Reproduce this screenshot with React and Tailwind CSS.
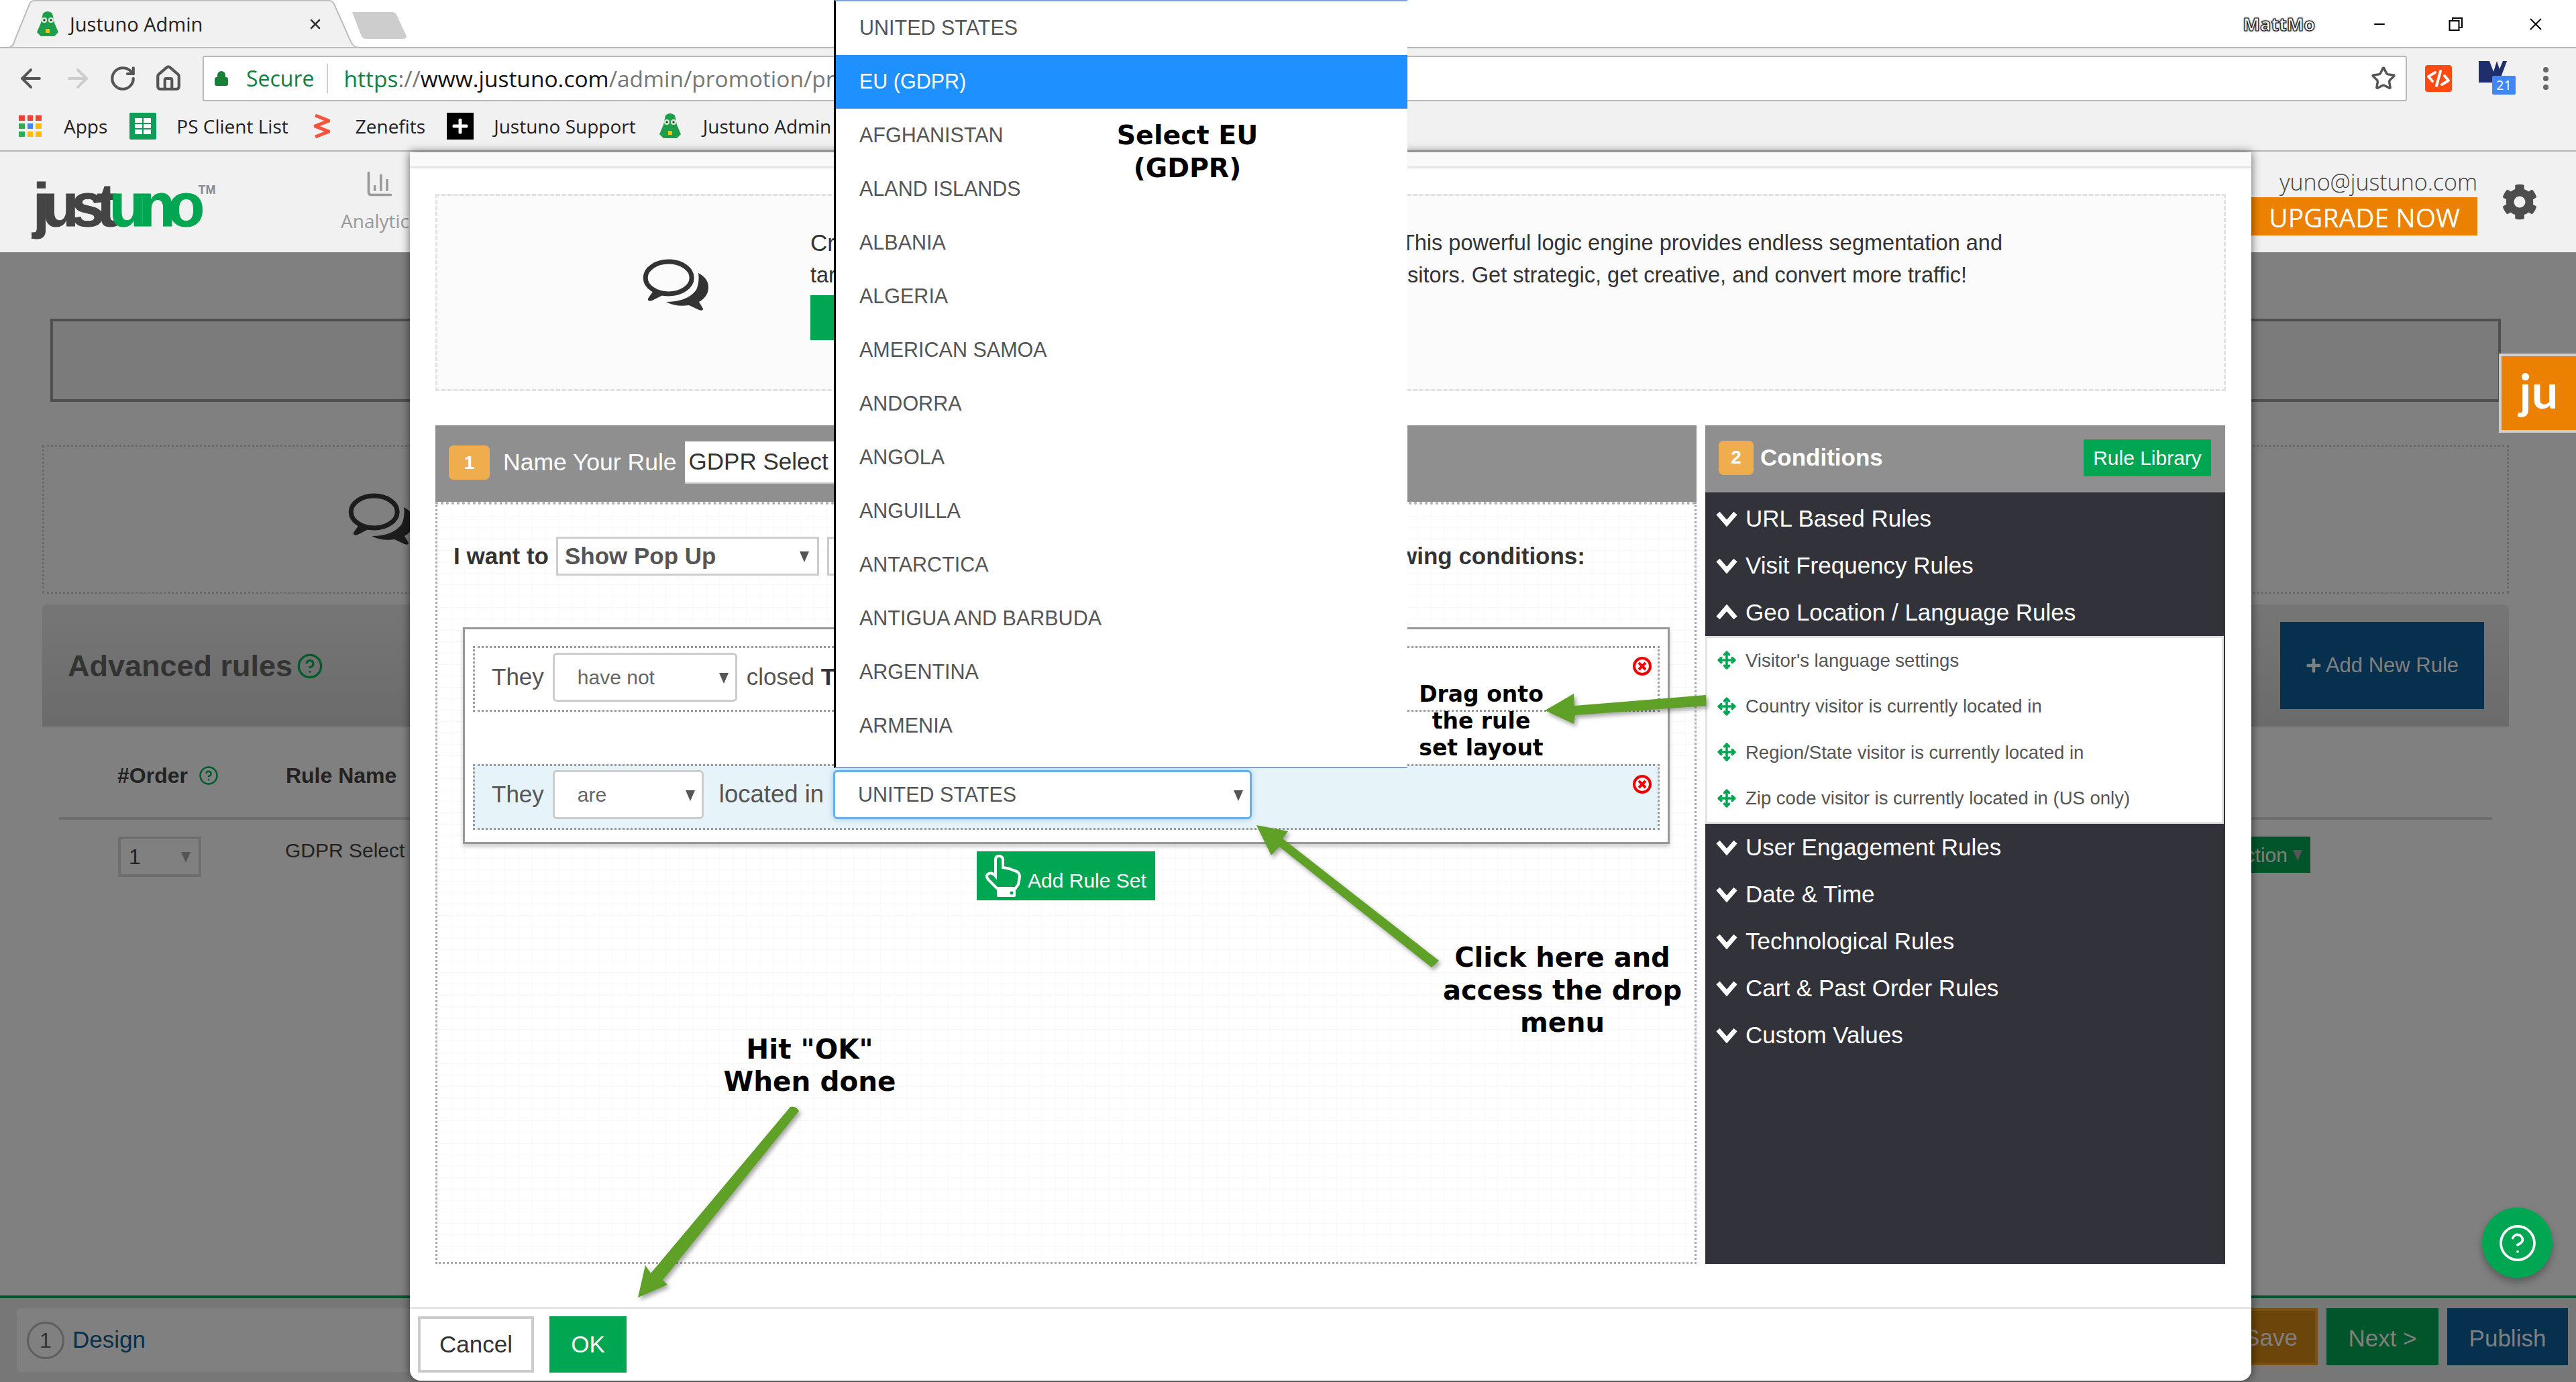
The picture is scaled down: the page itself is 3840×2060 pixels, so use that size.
import React from 'react';
import { ArrowLeft, ArrowRight, RotateCw, Home, Lock, Star, Move, X, Minus, HelpCircle, ChartColumn } from 'lucide-react';
import { FaCog, FaPlus } from 'react-icons/fa';

const COUNTRIES = ['UNITED STATES', 'EU (GDPR)', 'AFGHANISTAN', 'ALAND ISLANDS', 'ALBANIA', 'ALGERIA', 'AMERICAN SAMOA', 'ANDORRA', 'ANGOLA', 'ANGUILLA', 'ANTARCTICA', 'ANTIGUA AND BARBUDA', 'ARGENTINA', 'ARMENIA'];
const GEO_ITEMS = ["Visitor's language settings", 'Country visitor is currently located in', 'Region/State visitor is currently located in', 'Zip code visitor is currently located in (US only)'];
const RULES_BEFORE = ['URL Based Rules', 'Visit Frequency Rules'];
const RULES_AFTER = ['User Engagement Rules', 'Date & Time', 'Technological Rules', 'Cart & Past Order Rules', 'Custom Values'];

const Caret = ({ className = '' }) => (
  <svg width="14" height="20" viewBox="0 0 14 20" className={className}>
    <polygon points="0,3 14,3 7,19" fill="#555" />
  </svg>
);

const Chevron = ({ up }) => (
  <svg width="32" height="24" viewBox="0 0 32 24" className="shrink-0">
    <path d={up ? 'M3 20 L16 5 L29 20' : 'M3 4 L16 19 L29 4'} fill="none" stroke="#fff" strokeWidth="7" />
  </svg>
);

const Robot = ({ className = '' }) => (
  <svg width="38" height="40" viewBox="0 0 38 40" className={className}>
    <path d="M12 4 Q19 -2 26 4 L29 18 L35 32 L29 38 L9 38 L3 32 L9 18 Z" fill="#1e9e4a" />
    <circle cx="14" cy="14" r="4" fill="#d6efd9" />
    <circle cx="24" cy="14" r="4" fill="#d6efd9" />
    <circle cx="14" cy="14" r="1.6" fill="#222" />
    <circle cx="24" cy="14" r="1.6" fill="#222" />
    <rect x="16" y="27" width="6" height="6" fill="#f4c20d" />
  </svg>
);

const ChatIcon = ({ className = '', color = '#333' }) => (
  <svg width="150" height="110" viewBox="0 0 150 110" className={className}>
    <ellipse cx="66.7" cy="44" rx="34.5" ry="24" fill="none" stroke={color} strokeWidth="7" />
    <path d="M45 62 L36 75 Q35 80 42 78 L60 69 Z" fill={color} />
    <path d="M111 37 Q126 45 126 58 Q126 72 112 80 L118 90 Q118 94 112 92 L97 85 Q78 88 63 80 Q95 80 108 62 Q113 50 111 37 Z" fill={color} />
  </svg>
);

const HandIcon = () => (
  <svg width="54" height="64" viewBox="0 0 54 64" className="shrink-0">
    <path d="M16 32 V8 Q16 2 21 2 Q27 2 27 8 V19 L37 21 L45 24 Q52 26 52 33 L50 44 L46 50 H18 L6 38 Q0 31 6 28 Q11 26 16 32 Z" fill="none" stroke="#fff" strokeWidth="4" />
    <rect x="18" y="50" width="28" height="13" rx="2" fill="#fff" />
    <circle cx="40" cy="57" r="2.5" fill="#00a651" />
  </svg>
);

const AppsGrid = () => (
  <div className="grid grid-cols-3 gap-[4px] w-[34px]">
    {['bg-[#ea4335]', 'bg-[#ea4335]', 'bg-[#ea4335]', 'bg-[#34a853]', 'bg-[#4285f4]', 'bg-[#fbbc05]', 'bg-[#34a853]', 'bg-[#fbbc05]', 'bg-[#fbbc05]'].map((c, i) => (
      <div key={i} className={`h-[8px] ${c}`}></div>
    ))}
  </div>
);

const Browser = () => (
  <div className="font-['Open_Sans',sans-serif]">
    <div className="relative h-[72px] bg-white border-b-2 border-[#b5b5b5]">
      <svg width="620" height="72" viewBox="0 0 620 72" className="absolute left-0 top-0">
        <path d="M12 71 Q20 70 22 60 L44 6 Q46 1 52 1 L490 1 Q496 1 498 6 L522 60 Q526 70 534 71 Z" fill="#f1f1f1" stroke="#bdbdbd" strokeWidth="2" />
        <path d="M525 18 L585 18 Q590 18 592 24 L606 54 Q606 58 600 58 L546 58 Q540 58 538 52 Z" fill="#cdcdcd" />
      </svg>
      <div className="relative flex items-center h-[72px] pl-[52px]">
        <Robot />
        <span className="ml-[14px] text-[29px] text-[#222]">Justuno Admin</span>
        <X className="ml-[156px] w-[24px] h-[24px] text-[#333]" strokeWidth={2.5} />
        <div className="ml-auto flex items-center pr-[45px]">
          <span className="text-[27px] text-white font-bold [-webkit-text-stroke:1.2px_#222] [text-shadow:0_0_3px_#000]">MattMo</span>
          <Minus className="ml-[84px] w-[24px] h-[24px] text-black" strokeWidth={2} />
          <svg width="24" height="24" viewBox="0 0 24 24" className="ml-[90px]">
            <rect x="2.5" y="7" width="14" height="14" fill="none" stroke="#000" strokeWidth="2" />
            <path d="M7 7 V3 H21 V17 H17" fill="none" stroke="#000" strokeWidth="2" />
          </svg>
          <X className="ml-[92px] w-[30px] h-[30px] text-black" strokeWidth={1.5} />
        </div>
      </div>
    </div>

    <div className="flex items-center h-[78px] bg-[#f1f1f1] pl-[24px] pr-[41px] pt-[12px]">
      <ArrowLeft className="w-[44px] h-[44px] text-[#555] shrink-0" strokeWidth={2.2} />
      <ArrowRight className="ml-[26px] w-[44px] h-[44px] text-[#ccc] shrink-0" strokeWidth={2.2} />
      <RotateCw className="ml-[24px] w-[42px] h-[42px] text-[#555] shrink-0" strokeWidth={2.4} />
      <Home className="ml-[26px] w-[42px] h-[42px] text-[#555] shrink-0" strokeWidth={2.4} />
      <div className="ml-[30px] flex-1 flex items-center h-[68px] bg-white border-2 border-[#b8b8b8] rounded-[3px] pl-[14px]">
        <Lock className="w-[24px] h-[32px] text-[#188038] fill-[#188038]" strokeWidth={2} />
        <span className="ml-[25px] text-[32px] text-[#0b8043]">Secure</span>
        <div className="ml-[18px] w-[2px] h-[44px] bg-[#ccc]"></div>
        <span className="ml-[24px] text-[33.5px] whitespace-nowrap text-[#777]">
          <span className="text-[#0b8043]">https</span>://<span className="text-[#111]">www.justuno.com</span>/admin/promotion/pr
        </span>
        <Star className="ml-auto mr-[14px] w-[38px] h-[38px] text-[#555]" strokeWidth={2.2} />
      </div>
      <svg width="40" height="40" viewBox="0 0 40 40" className="ml-[27px] shrink-0">
        <rect width="40" height="40" rx="4" fill="#ff4a12" />
        <path d="M15 11 L5 17 L11 24 M25 29 L35 23 L29 16 M23 9 L17 31" fill="none" stroke="#fff" strokeWidth="4" strokeLinecap="round" strokeLinejoin="round" />
      </svg>
      <div className="relative ml-[40px] w-[55px] h-[52px] shrink-0">
        <svg width="42" height="32" viewBox="0 0 42 32">
          <path d="M0 0 H42 L30 32 H0 Z" fill="#1f2f6e" />
          <path d="M16 0 L22 16 L27 0 Z M27 0 L31 12 L36 0 Z" fill="#f1f1f1" />
        </svg>
        <div className="absolute left-[20px] top-[22px] w-[35px] h-[28px] rounded-[2px] bg-[#4285f4] text-white text-[20px] leading-[28px] text-center">21</div>
      </div>
      <div className="ml-[41px] flex flex-col gap-[5px] shrink-0">
        <div className="w-[8px] h-[8px] rounded-full bg-[#666]"></div>
        <div className="w-[8px] h-[8px] rounded-full bg-[#666]"></div>
        <div className="w-[8px] h-[8px] rounded-full bg-[#666]"></div>
      </div>
    </div>

    <div className="flex items-center h-[76px] bg-[#f1f1f1] border-b-2 border-[#b5b5b5] pl-[28px] pt-[2px] text-[28px] text-[#222] whitespace-nowrap">
      <AppsGrid />
      <span className="ml-[33px]">Apps</span>
      <div className="ml-[33px] w-[40px] h-[40px] bg-[#0f9d58] rounded-[2px] p-[8px] grid grid-cols-2 gap-[2px]">
        <div className="bg-white"></div><div className="bg-white"></div>
        <div className="bg-white"></div><div className="bg-white"></div>
        <div className="bg-white"></div><div className="bg-white"></div>
      </div>
      <span className="ml-[30px]">PS Client List</span>
      <svg width="24" height="40" viewBox="0 0 24 40" className="ml-[38px]">
        <path d="M2 4 L22 12 L2 20 L22 28 L2 36" fill="none" stroke="#f4533c" strokeWidth="5" />
      </svg>
      <span className="ml-[38px]">Zenefits</span>
      <div className="ml-[32px] w-[40px] h-[40px] bg-black flex items-center justify-center"><FaPlus className="w-[26px] h-[26px] text-white" /></div>
      <span className="ml-[30px]">Justuno Support</span>
      <Robot className="ml-[32px]" />
      <span className="ml-[30px]">Justuno Admin</span>
    </div>
  </div>
);

const AppHeader = () => (
  <div className="flex items-center justify-between h-[150px] bg-[#f1f1f1] pl-[49px] pr-[57px]">
    <div className="flex items-center">
      <div className="flex items-start w-[293px] h-[110px] pt-[10px] font-bold text-[90px] leading-[100px] tracking-[-11.5px] [-webkit-text-stroke:1px_currentColor]">
        <span className="text-[#444]">just</span>
        <span className="text-[#00a651]">uno</span>
        <span className="ml-[2px] mt-[12px] text-[18px] leading-[30px] tracking-normal text-[#888] [-webkit-text-stroke:0]">TM</span>
      </div>
      <div className="ml-[166px] flex flex-col items-center text-[#999]">
        <ChartColumn className="w-[44px] h-[44px]" strokeWidth={2} />
        <span className="mt-[12px] text-[28px] font-['Open_Sans',sans-serif]">Analytics</span>
      </div>
    </div>
    <div className="flex items-center">
      <div className="flex flex-col items-end font-['Open_Sans',sans-serif]">
        <span className="text-[34px] font-light text-[#444] leading-[40px]">yuno@justuno.com</span>
        <div className="mt-[3px] flex items-center h-[57px] bg-[#ec8000] px-[26px] pt-[2px] text-[39px] text-white leading-none">UPGRADE NOW</div>
      </div>
      <FaCog className="ml-[36px] w-[54px] h-[54px] text-[#4d4d4d]" />
    </div>
  </div>
);

const Backdrop = () => (
  <div className="flex-1 flex flex-col bg-[#808080] text-[#222] overflow-hidden">
    <div className="flex-1 pl-[63px] pr-[100px] pt-[99px]">
      <div className="mx-[12px] h-[124px] border-[4px] border-[#4f4f4f] bg-[#7b7b7b]"></div>
      <div className="mt-[64px] h-[222px] border-[3px] border-dotted border-[#6a6a6a] flex items-center pl-[425px]">
        <ChatIcon color="#1c1c1c" />
      </div>
      <div className="mt-[16px] h-[182px] rounded-t-[8px] bg-gradient-to-b from-[#767676] to-[#6b6b6b] flex items-center justify-between pl-[38px] pr-[37px]">
        <div className="flex items-center pt-[2px] text-[45px] font-bold text-[#333]">
          Advanced rules
          <HelpCircle className="ml-[6px] w-[40px] h-[40px] text-[#005c2c]" strokeWidth={2} />
        </div>
        <div className="flex items-center justify-center w-[304px] h-[130px] bg-[#06304d] text-[#808080] text-[31px]">
          <FaPlus className="mr-[6px] w-[24px] h-[24px]" />Add New Rule
        </div>
      </div>
      <div className="mx-[25px] h-[139px] border-b-[4px] border-[#6e6e6e] flex items-center text-[32px] font-bold pl-[87px] pt-[10px]">
        <span>#Order</span>
        <HelpCircle className="ml-[16px] w-[30px] h-[30px] text-[#005c2c]" strokeWidth={2} />
        <span className="ml-[100px]">Rule Name</span>
      </div>
      <div className="mx-[25px] flex items-start pt-[25px] pl-[88px] pr-[271px]">
        <div className="flex items-center justify-between w-[124px] h-[60px] border-[4px] border-[#6e6e6e] px-[12px] text-[32px]">1<Caret /></div>
        <span className="ml-[125px] mt-[-2px] text-[30px]">GDPR Select</span>
        <div className="ml-auto flex items-center h-[54px] px-[12px] bg-[#02542a] text-[#808080] text-[30px]">Action <Caret className="ml-[8px]" /></div>
      </div>
    </div>
    <div className="flex items-start justify-between h-[129px] bg-[#777] border-t-[4px] border-[#02542a] pl-[25px] pr-[12px] pt-[15px]">
      <div className="flex items-center w-[600px] h-[95px] bg-[#808080] rounded-[6px] pl-[15px]">
        <div className="flex items-center justify-center w-[56px] h-[56px] rounded-full border-[3px] border-[#5e5e5e] text-[32px] text-[#333]">1</div>
        <span className="ml-[12px] text-[35px] text-[#06304d]">Design</span>
      </div>
      <div className="flex gap-[13px] text-[35px] text-[#808080]">
        <div className="flex items-center justify-center w-[140px] h-[85px] pt-[4px] bg-[#6b4509] border-[4px] border-[#7b5017]">Save</div>
        <div className="flex items-center justify-center w-[167px] h-[85px] pt-[6px] bg-[#02542a]">Next &gt;</div>
        <div className="flex items-center justify-center w-[180px] h-[85px] pt-[6px] bg-[#06304d]">Publish</div>
      </div>
    </div>
  </div>
);

const SelectBox = ({ children, className = '' }) => (
  <div className={`flex items-center justify-between h-[73px] bg-white border-[3px] border-[#ccc] rounded-[6px] pl-[34px] pr-[10px] text-[#666] ${className}`}>
    {children}
    <Caret />
  </div>
);

const RemoveIcon = () => (
  <svg width="30" height="30" viewBox="0 0 30 30" className="self-start mt-[12px]">
    <circle cx="15" cy="15" r="12" fill="#fff" stroke="#f00000" strokeWidth="4" />
    <path d="M10 10 L20 20 M20 10 L10 20" stroke="#f00000" strokeWidth="4" />
  </svg>
);

const RulePanel = () => (
  <div className="w-[1880px] flex flex-col">
    <div className="flex items-center h-[114px] bg-[#8f8f8f] pl-[20px] pb-[3px] text-[35px] text-white">
      <div className="flex items-center justify-center w-[61px] h-[51px] rounded-[7px] bg-[#f0ad4e] text-[28px] font-bold">1</div>
      <span className="ml-[20px] text-[35.5px]">Name Your Rule</span>
      <div className="ml-[12px] flex items-center w-[240px] h-[63px] bg-white pl-[6px] text-[#333] border-b-2 border-[#ccc]">GDPR Select</div>
    </div>
    <div className="flex-1 border-[3px] border-t-[4px] border-dotted border-[#aaa] bg-white bg-[linear-gradient(#f7f7f7_1px,transparent_1px),linear-gradient(90deg,#f9f9f9_1px,transparent_1px)] bg-[size:20px_17px]">
      <div className="flex items-center h-[58px] mt-[48px] pl-[24px] pr-[163px] text-[35px] font-bold text-[#333]">
        I want to
        <div className="ml-[11px] flex items-center justify-between w-[392px] h-[58px] bg-white border-[3px] border-[#ccc] pl-[10px] pr-[12px] text-[#555]">Show Pop Up<Caret /></div>
        <div className="ml-[12px] w-[200px] h-[58px] bg-white border-[3px] border-[#ccc]"></div>
        <span className="ml-auto">following conditions:</span>
      </div>
      <div className="mt-[77px] ml-[38px] w-[1799px] h-[323px] bg-white border-[3px] border-[#999] shadow-[0_4px_6px_rgba(0,0,0,0.2)] pt-[25px] px-[12px] text-[35px] text-[#555]">
        <div className="flex items-center justify-between h-[98px] border-[3px] border-dotted border-[#999] pl-[25px] pr-[8px] pb-[5px]">
          <div className="flex items-center">
            <span>They</span>
            <SelectBox className="ml-[13px] w-[275px] text-[30px]">have not</SelectBox>
            <span className="ml-[14px]">closed <b className="text-[#333]">T</b></span>
          </div>
          <RemoveIcon />
        </div>
        <div className="mt-[78px] flex items-center justify-between h-[98px] border-[3px] border-dotted border-[#999] bg-[#e6f3f8] pl-[25px] pr-[8px] pb-[7px]">
          <div className="flex items-center">
            <span>They</span>
            <SelectBox className="ml-[13px] w-[225px] text-[30px]">are</SelectBox>
            <span className="ml-[23px] text-[36.5px]">located in</span>
            <SelectBox className="ml-[14px] w-[624px] !border-[#66afe9] shadow-[0_0_8px_rgba(102,175,233,0.6)] text-[30.5px] !text-[#555]">UNITED STATES</SelectBox>
          </div>
          <RemoveIcon />
        </div>
      </div>
      <div className="mt-[11px] flex justify-center">
        <div className="flex items-center w-[266px] h-[73px] bg-[#00a651] pl-[12px] text-[30px] text-white">
          <HandIcon />
          <span className="ml-[10px] mt-[14px] whitespace-nowrap">Add Rule Set</span>
        </div>
      </div>
    </div>
  </div>
);

const AccordionRow = ({ label, open }) => (
  <div className="flex items-center h-[70px] pl-[16px] text-[35px] text-white">
    <Chevron up={open} />
    <span className="ml-[12px]">{label}</span>
  </div>
);

const ConditionsPanel = () => (
  <div className="w-[775px] flex flex-col bg-[#32323a]">
    <div className="flex items-center justify-between h-[100px] bg-[#8f8f8f] pl-[20px] pr-[21px] pb-[4px]">
      <div className="flex items-center">
        <div className="flex items-center justify-center w-[52px] h-[51px] rounded-[7px] bg-[#f0ad4e] text-[28px] font-bold text-white">2</div>
        <span className="ml-[10px] text-[35px] font-bold text-white">Conditions</span>
      </div>
      <div className="flex items-center justify-center w-[190px] h-[55px] bg-[#00a651] text-[30px] text-white">Rule Library</div>
    </div>
    <div className="pt-[4px]">
      {RULES_BEFORE.map((r) => <AccordionRow key={r} label={r} />)}
      <AccordionRow label="Geo Location / Language Rules" open />
    </div>
    <div className="mr-[2px] h-[280px] bg-white border-[3px] border-[#e2e2e2] flex flex-col justify-center">
      {GEO_ITEMS.map((item) => (
        <div key={item} className="flex items-center h-[69px] pl-[15px] pb-[2px] text-[27.5px] text-[#555]">
          <Move className="w-[28px] h-[34px] text-[#00a651] shrink-0" strokeWidth={3} />
          <span className="ml-[14px]">{item}</span>
        </div>
      ))}
    </div>
    <div>
      {RULES_AFTER.map((r) => <AccordionRow key={r} label={r} />)}
    </div>
  </div>
);

const Modal = () => (
  <div className="absolute left-[611px] top-[227px] w-[2745px] h-[1831px] flex flex-col bg-white rounded-b-[16px] shadow-[0_0_14px_rgba(0,0,0,0.6)]">
    <div className="h-[24px] bg-[#f9f9f9] border-b-[3px] border-[#e5e5e5]"></div>
    <div className="flex-1 px-[38px] pt-[38px]">
      <div className="relative flex items-start h-[294px] bg-[#fbfbfb] border-[3px] border-dashed border-[#e2e2e2] text-[32.5px] text-[#333]">
        <ChatIcon className="absolute left-[278px] top-[78px]" />
        <div className="ml-[556px] mt-[46px] leading-[48px]">
          <div className="text-[35px]">Cr</div>
          <div>tar</div>
          <div className="mt-[6px] w-[60px] h-[67px] bg-[#00a651]"></div>
        </div>
        <div className="ml-auto mr-[330px] mt-[46px] leading-[48px] text-right whitespace-nowrap">
          <div>This powerful logic engine provides endless segmentation and</div>
          <div className="mr-[53px]">sitors. Get strategic, get creative, and convert more traffic!</div>
        </div>
      </div>
      <div className="mt-[51px] flex gap-[13px] h-[1250px]">
        <RulePanel />
        <ConditionsPanel />
      </div>
    </div>
    <div className="flex items-start gap-[23px] h-[110px] border-t-[3px] border-[#e5e5e5] pl-[12px] pt-[11px] text-[35px]">
      <div className="flex items-center justify-center w-[173px] h-[84px] border-[4px] border-[#ccc] text-[#333]">Cancel</div>
      <div className="flex items-center justify-center w-[115px] h-[84px] bg-[#00a651] text-white">OK</div>
    </div>
  </div>
);

const CountryMenu = () => (
  <div className="absolute left-[1243px] top-0 w-[855px] h-[1145px] bg-white border-l-[3px] border-black border-t-2 border-b-2 border-t-[#7aa3dc] border-b-[#7aa3dc] text-[30.5px] text-[#555]">
    {COUNTRIES.map((c) => (
      <div key={c} className={`flex items-center h-[80px] pl-[35px] ${c === 'EU (GDPR)' ? 'bg-[#1e90ff] text-white' : ''}`}>{c}</div>
    ))}
  </div>
);

const Note = ({ className, lines }) => (
  <div className={`absolute text-center font-bold font-['DejaVu_Sans',sans-serif] text-black whitespace-nowrap ${className}`}>
    {lines.map((l) => <div key={l}>{l}</div>)}
  </div>
);

const Annotations = () => (
  <>
    <Note className="left-[1570px] w-[400px] top-[177px] text-[39.5px] leading-[49px]" lines={['Select EU', '(GDPR)']} />
    <Note className="left-[2008px] w-[400px] top-[1015px] text-[33px] leading-[40px]" lines={['Drag onto', 'the rule', 'set layout']} />
    <Note className="left-[2129px] w-[400px] top-[1403px] text-[40px] leading-[48.5px]" lines={['Click here and', 'access the drop', 'menu']} />
    <Note className="left-[1007px] w-[400px] top-[1540px] text-[40.5px] leading-[48px]" lines={['Hit "OK"', 'When done']} />
    <svg width="3840" height="2060" viewBox="0 0 3840 2060" className="absolute left-0 top-0 pointer-events-none drop-shadow-[3px_4px_3px_rgba(0,0,0,0.35)]">
      <path d="M2543 1036 L2543 1052 L2348 1066 L2346 1079 L2303 1059 L2346 1034 L2347 1052 Z" fill="#5fa127" />
      <path d="M2145 1432 L2134 1442 L1907 1262 L1895 1275 L1873 1230 L1920 1239 L1912 1250 Z" fill="#5fa127" />
      <path d="M1178 1650 Q1186 1648 1191 1656 L988 1908 L995 1915 L951 1934 L962 1886 L970 1898 Z" fill="#5fa127" />
    </svg>
  </>
);

const App = () => (
  <div className="relative w-[3840px] h-[2060px] overflow-hidden flex flex-col font-['Liberation_Sans',Arial,sans-serif]">
    <Browser />
    <AppHeader />
    <Backdrop />
    <div className="absolute left-[3725px] top-[527px] flex items-center justify-center w-[115px] h-[118px] pb-[8px] bg-[#ec8000] border-[4px] border-r-0 border-[#cfcfcf] text-white font-bold text-[70px] leading-none font-['Lato',sans-serif]">ju</div>
    <div className="absolute left-[3700px] top-[1800px] flex items-center justify-center w-[105px] h-[105px] rounded-full bg-[#00a651] shadow-[0_6px_12px_rgba(0,0,0,0.3)]">
      <HelpCircle className="w-[60px] h-[60px] text-white" strokeWidth={1.5} />
    </div>
    <Modal />
    <CountryMenu />
    <Annotations />
  </div>
);

export default App;
